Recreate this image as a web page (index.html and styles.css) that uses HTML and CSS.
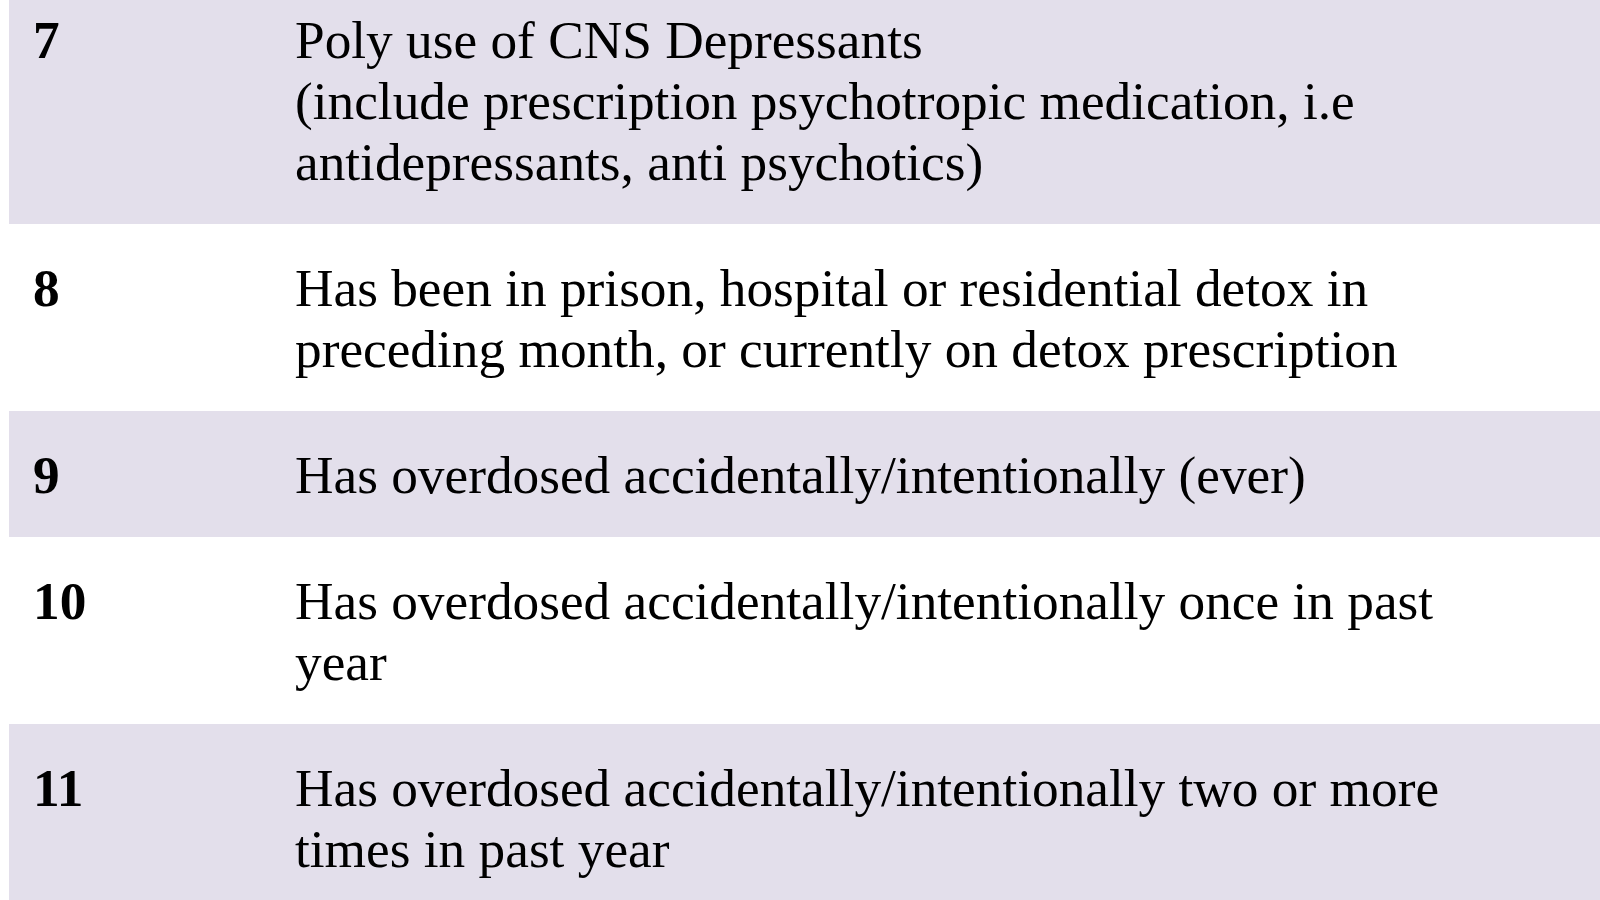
FILE: index.html
```html
<!DOCTYPE html>
<html lang="en">
<head>
<meta charset="utf-8">
<title>Risk factors</title>
<link rel="stylesheet" href="styles.css">
</head>
<body>
<div class="table">
  <div class="row shaded">
    <div class="num">7</div>
    <div class="desc">Poly use of CNS Depressants<br>(include prescription psychotropic medication, i.e<br>antidepressants, anti psychotics)</div>
  </div>
  <div class="row">
    <div class="num">8</div>
    <div class="desc">Has been in prison, hospital or residential detox in<br>preceding month, or currently on detox prescription</div>
  </div>
  <div class="row shaded">
    <div class="num">9</div>
    <div class="desc">Has overdosed accidentally/intentionally (ever)</div>
  </div>
  <div class="row">
    <div class="num">10</div>
    <div class="desc">Has overdosed accidentally/intentionally once in past<br>year</div>
  </div>
  <div class="row shaded">
    <div class="num">11</div>
    <div class="desc">Has overdosed accidentally/intentionally two or more<br>times in past year</div>
  </div>
</div>
</body>
</html>
```

FILE: styles.css
```css
html, body {
  margin: 0;
  padding: 0;
  background: #ffffff;
  overflow: hidden;
}
body {
  font-family: "Liberation Serif", "Times New Roman", serif;
  color: #000000;
}
.table {
  margin-top: -24px;
  margin-left: 9px;
  display: flex;
  flex-direction: column;
}
.row {
  display: grid;
  grid-template-columns: 286px 1fr;
  padding: 34px 0 31px 0;
  font-size: 53.3px;
  line-height: 61px;
}
.shaded {
  background: #e3dfeb;
}
.num {
  font-weight: bold;
  padding-left: 24px;
}
.desc {
  white-space: nowrap;
}
```
